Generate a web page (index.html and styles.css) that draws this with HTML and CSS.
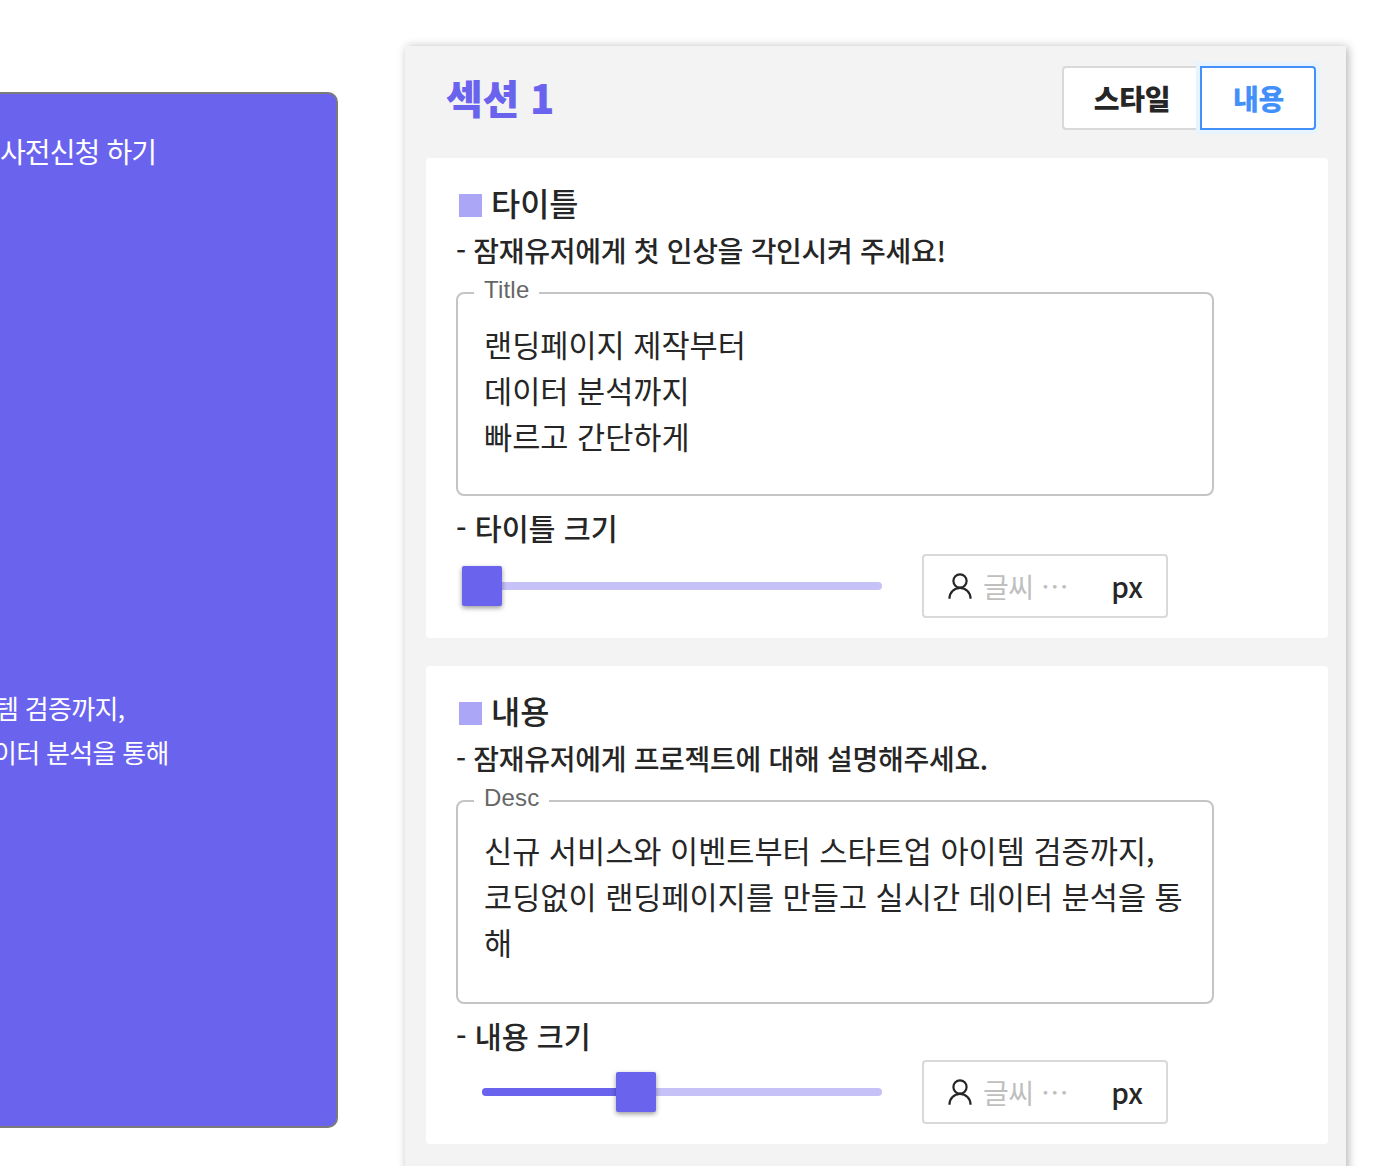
FILE: index.html
```html
<!DOCTYPE html>
<html lang="ko">
<head>
<meta charset="utf-8">
<title>섹션 1</title>
<link rel="stylesheet" href="styles.css">
</head>
<body>
<main class="page">
  <section class="preview">
    <p class="cta"><span>사전신청 하기</span></p>
    <p class="copy"><span class="copy-a">템 검증까지,</span><span class="copy-b">이터 분석을 통해</span></p>
  </section>
  <aside class="panel">
    <header class="head">
      <h1><span>섹션 1</span></h1>
      <div class="tabs"><button class="tab style"><span>스타일</span></button><button class="tab active"><span>내용</span></button></div>
    </header>
    <section class="card first">
      <h2><i class="square"></i><span>타이틀</span></h2>
      <p class="hint"><span>- 잠재유저에게 첫 인상을 각인시켜 주세요!</span></p>
      <fieldset class="field"><legend>Title</legend><div class="value">랜딩페이지 제작부터<br>데이터 분석까지<br>빠르고 간단하게</div></fieldset>
      <p class="label"><span>- 타이틀 크기</span></p>
      <div class="controls">
        <div class="slider"><i class="thumb start"></i></div>
        <div class="size"><svg width="28" height="28" viewBox="0 0 28 28"><circle cx="14" cy="9" r="6.6"/><path d="M3.4 26.8A10.6 10.9 0 0 1 24.6 26.8"/></svg><span class="ph">글씨 ⋯</span><span class="unit">px</span></div>
      </div>
    </section>
    <section class="card second">
      <h2><i class="square"></i><span>내용</span></h2>
      <p class="hint"><span>- 잠재유저에게 프로젝트에 대해 설명해주세요.</span></p>
      <fieldset class="field"><legend>Desc</legend><div class="value">신규 서비스와 이벤트부터 스타트업 아이템 검증까지,<br>코딩없이 랜딩페이지를 만들고 실시간 데이터 분석을 통<br>해</div></fieldset>
      <p class="label"><span>- 내용 크기</span></p>
      <div class="controls">
        <div class="slider"><i class="fill"></i><i class="thumb middle"></i></div>
        <div class="size"><svg width="28" height="28" viewBox="0 0 28 28"><circle cx="14" cy="9" r="6.6"/><path d="M3.4 26.8A10.6 10.9 0 0 1 24.6 26.8"/></svg><span class="ph">글씨 ⋯</span><span class="unit">px</span></div>
      </div>
    </section>
  </aside>
</main>
</body>
</html>
```
FILE: styles.css
```css
* { box-sizing: border-box; }
body { margin: 0; background: #fff; color: #262626; font-family: "Noto Sans CJK KR", sans-serif; }
h1, h2, p { margin: 0; white-space: nowrap; }
.page { height: 1166px; display: flex; overflow: hidden; align-items: flex-start; }
.preview { width: 338px; height: 1036px; margin-top: 92px; flex: none; overflow: hidden; background: #6a63ee; border: 2px solid #7b7b7b; border-left: 0; border-radius: 0 10px 10px 0; color: #fff; }
.cta { height: 44px; margin-top: 35px; font-size: 28px; line-height: 45px; letter-spacing: -.9px; }
.copy { margin-top: 513px; font-size: 26px; line-height: 44px; letter-spacing: -.7px; }
.copy span { display: block; }
.copy-a { margin-left: -5px; }
.copy-b { margin-left: -7px; }
.panel { width: 941px; height: 1140px; flex: none; margin: 46px 0 0 67px; padding: 20px 18px 0 21px; background: #f3f3f3; box-shadow: 2px 1px 9px rgba(0,0,0,.3); }
.head { display: flex; justify-content: space-between; height: 92px; padding: 0 12px 0 20px; }
h1 { color: #6a63ee; font-size: 40px; line-height: 62px; font-weight: 900; letter-spacing: -.3px; }
.tabs { display: flex; height: 64px; }
.tab { font: 900 28px/60px "Noto Sans CJK KR", sans-serif; letter-spacing: -.2px; padding: 0; color: #262626; background: #fff; border: 2px solid #d9d9d9; width: 116px; border-radius: 0 4px 4px 0; }
.tab.style { width: 138px; border-right: 0; border-radius: 4px 0 0 4px; }
.tab.active { padding-left: 1px; color: #4490fa; border-color: #4490fa; box-shadow: 0 0 0 4px #e6f4ff; }
.card { width: 902px; height: 480px; padding: 22px 30px 0; background: #fff; border-radius: 4px; }
.second { margin-top: 28px; height: 478px; }
h2 { display: flex; height: 46px; font-size: 31.7px; font-weight: 500; line-height: 45px; gap: 9px; padding-left: 3px; }
.square { width: 23px; height: 23px; margin-top: 14px; background: #aba6f5; }
.hint { height: 48px; font-size: 28px; line-height: 49px; font-weight: 500; letter-spacing: -.29px; }
.field { width: 758px; height: 217px; min-width: 0; margin: 5px 0 0; padding: 0 26px; border: 2px solid #c4c4c4; border-radius: 8px; color: #262626; }
legend { height: 28px; margin-left: -10px; padding: 0 10px; font: 24px/22px "Liberation Sans", sans-serif; letter-spacing: .2px; color: #666; }
.value { margin-top: 14px; font-size: 30.6px; line-height: 46px; white-space: nowrap; }
.second .value { margin-top: 12px; }
.label { height: 58px; font-size: 29.3px; font-weight: 500; line-height: 62px; }
.second .label { height: 56px; }
.controls { display: flex; height: 64px; align-items: center; }
.slider { position: relative; width: 400px; height: 8px; margin-left: 26px; border-radius: 4px; background: #c6c2f8; }
.thumb { position: absolute; top: -16px; width: 40px; height: 40px; background: #6a63ee; border-radius: 2px; box-shadow: 0 2px 5px #0006; }
.start { left: -20px; }
.middle { left: 134px; }
.fill { display: block; width: 154px; height: 8px; border-radius: 4px; background: #6a63ee; }
.size { display: flex; width: 246px; height: 64px; margin-left: 40px; padding: 0 23px 0 22px; align-items: center; border: 2px solid #d9d9d9; border-radius: 4px; font-size: 28px; }
.size svg { fill: none; stroke: #262626; stroke-width: 2.2; }
.ph { color: #bfbfbf; margin-left: 9px; white-space: nowrap; letter-spacing: -.5px; }
.unit { margin-left: auto; font-weight: 500; }
```
